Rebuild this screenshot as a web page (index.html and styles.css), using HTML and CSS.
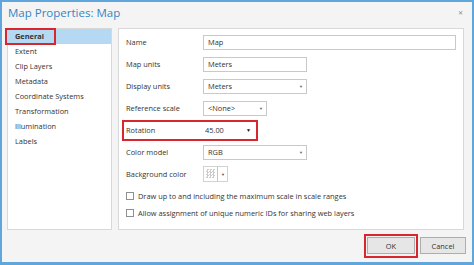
FILE: index.html
```html
<!DOCTYPE html>
<html lang="en">
<head>
    <meta charset="UTF-8">
    <title>Map Properties: Map</title>
    <link rel="stylesheet" href="styles.css">
</head>
<body>
    <div class="dialog">
        <div class="titlebar">
            <span class="title">Map Properties: Map</span>
            <span class="close">&#x2715;</span>
        </div>
        <div class="content">
            <ul class="nav">
                <li class="selected">General<span class="mark"></span></li>
                <li>Extent</li>
                <li>Clip Layers</li>
                <li>Metadata</li>
                <li>Coordinate Systems</li>
                <li>Transformation</li>
                <li>Illumination</li>
                <li>Labels</li>
            </ul>
            <div class="pane">
                <div class="row">
                    <label>Name</label>
                    <div class="field wide">Map</div>
                </div>
                <div class="row">
                    <label>Map units</label>
                    <div class="field mid">Meters</div>
                </div>
                <div class="row">
                    <label>Display units</label>
                    <div class="field mid">Meters<span class="arrow">&#9660;</span></div>
                </div>
                <div class="row">
                    <label>Reference scale</label>
                    <div class="field short">&lt;None&gt;<span class="arrow">&#9660;</span></div>
                </div>
                <div class="row">
                    <span class="row-mark"></span>
                    <label>Rotation</label>
                    <div class="field rot">45.00<span class="arrow dark">&#9660;</span></div>
                </div>
                <div class="row">
                    <label>Color model</label>
                    <div class="field mid">RGB<span class="arrow">&#9660;</span></div>
                </div>
                <div class="row">
                    <label>Background color</label>
                    <div class="color-pick">
                        <div class="swatch"><span class="checker"></span></div>
                        <span class="swatch-arrow">&#9660;</span>
                    </div>
                </div>
                <div class="check first">
                    <span class="box"></span>Draw up to and including the maximum scale in scale ranges
                </div>
                <div class="check">
                    <span class="box"></span>Allow assignment of unique numeric IDs for sharing web layers
                </div>
            </div>
        </div>
        <div class="buttons">
            <button class="btn ok">OK</button>
            <button class="btn cancel">Cancel</button>
        </div>
    </div>
</body>
</html>
```
FILE: styles.css
```css
body{
    margin: 0;
    background: #fff;
}

.dialog{
    width: 474px;
    height: 265px;
    box-sizing: border-box;
    border: 2px solid #5ea6dc;
    border-bottom-width: 3px;
    background: #f4f4f4;
    display: flex;
    flex-direction: column;
    font-family: "Open Sans", sans-serif;
    color: #333;
}

.titlebar{
    height: 26px;
    display: flex;
    justify-content: space-between;
    align-items: flex-start;
    padding: 3px 9px 0 6px;
    box-sizing: border-box;
}
.title{
    font-size: 11.5px;
    line-height: 16px;
    color: #3584c6;
}
.close{
    font-size: 6px;
    line-height: 16px;
    color: #888;
}

.content{
    flex: 1;
    display: flex;
    gap: 6px;
    padding: 0 8px 0 5px;
}

.nav{
    width: 105px;
    box-sizing: border-box;
    margin: 0;
    padding: 0;
    list-style: none;
    background: #fff;
    border: 1px solid #d8d8d8;
}
.nav li{
    height: 15px;
    line-height: 15px;
    padding-left: 7px;
    font-size: 7.4px;
    position: relative;
}
.nav li.selected{
    background: #b5d8f3;
    font-weight: bold;
}
/* red highlight boxes */
.mark,
.row-mark,
.ok::after{
    position: absolute;
    box-sizing: border-box;
    border: 2px solid #d7262e;
}
.mark{
    left: -3px;
    top: -1px;
    width: 51px;
    height: 17px;
}

.pane{
    flex: 1;
    background: #fff;
    border: 1px solid #d8d8d8;
    padding: 2px 0 0 7px;
}
.row{
    position: relative;
    display: flex;
    align-items: center;
    height: 22px;
    font-size: 7.4px;
}
.row label{
    width: 77px;
}
.row-mark{
    left: -4px;
    top: 1px;
    width: 136px;
    height: 21px;
}
.field{
    height: 15px;
    box-sizing: border-box;
    border: 1px solid #c9c9c9;
    display: flex;
    align-items: center;
    padding-left: 4px;
}
.wide{ width: 253px; }
.mid{ width: 104px; }
.short{ width: 64px; }
.rot{ width: 54px; border-color: transparent; padding-left: 1px; }

.arrow{
    margin-left: auto;
    margin-right: 3px;
    font-size: 4px;
    color: #666;
}
.arrow.dark{
    font-size: 5px;
    color: #111;
    margin-right: 5px;
}

.color-pick{
    display: flex;
    align-items: center;
    height: 16px;
    box-sizing: border-box;
    border: 1px solid #d2d2d2;
}
.swatch{
    width: 14px;
    height: 14px;
    box-sizing: border-box;
    border-right: 1px solid #c4c4c4;
    padding: 2px;
}
.checker{
    display: block;
    width: 9px;
    height: 9px;
    background: repeating-conic-gradient(#ccc 0 25%, #fff 0 50%) 0 0 / 3px 3px;
}
.swatch-arrow{
    font-size: 4px;
    color: #555;
    padding: 0 2px 0 3px;
}

.check{
    display: flex;
    align-items: center;
    height: 17px;
    font-size: 7.4px;
}
.check.first{
    margin-top: 2px;
}
.box{
    width: 8px;
    height: 8px;
    box-sizing: border-box;
    border: 1px solid #8f8f8f;
    background: #fff;
    margin-right: 4px;
}

.buttons{
    height: 32px;
    box-sizing: border-box;
    display: flex;
    justify-content: flex-end;
    align-items: flex-start;
    gap: 5px;
    padding: 7px 6px 0 0;
}
.btn{
    height: 17px;
    padding: 0;
    border: 1px solid #adadad;
    background: #e6e6e6;
    font-family: "Open Sans", sans-serif;
    font-size: 7.4px;
    color: #333;
}
.ok{
    width: 48px;
    position: relative;
}
.ok::after{
    content: "";
    left: -4px;
    top: -4px;
    width: 54px;
    height: 24px;
}
.cancel{
    width: 46px;
}
```
